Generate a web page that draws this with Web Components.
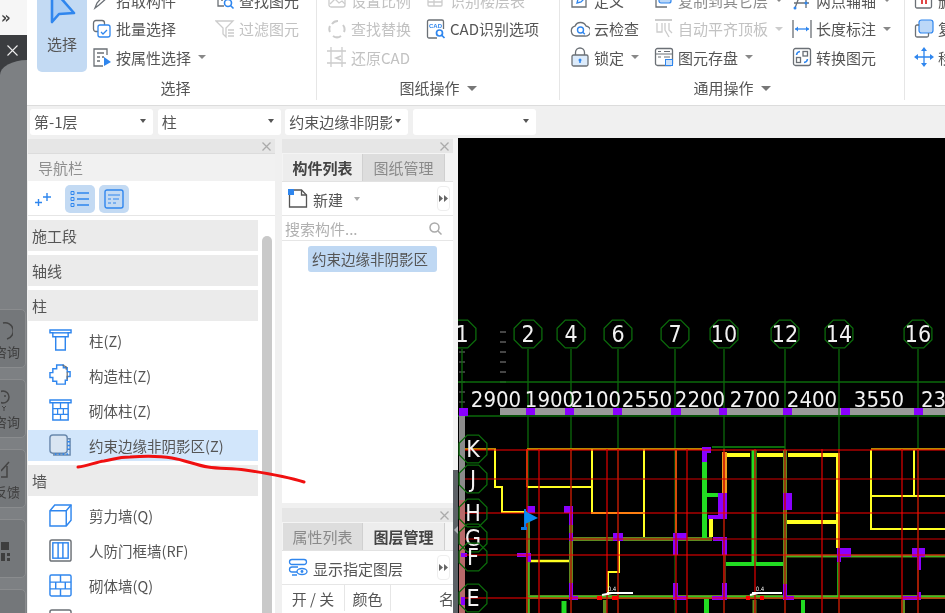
<!DOCTYPE html>
<html lang="zh"><head><meta charset="utf-8"><title>GTJ</title>
<style>
html,body{margin:0;height:100%;overflow:hidden;background:#f0f0f0}
body{font:15px "Noto Sans CJK SC","Noto Sans",sans-serif;color:#555}
app-shell{width:945px;height:613px}
</style></head>
<body>
<app-shell>
  <gtj-sidebar slot="side"></gtj-sidebar>
  <gtj-ribbon slot="ribbon">
    <ribbon-group label="选择" width="290" arrow="0">
      <ribbon-large></ribbon-large>
      <ribbon-col width="123">
        <ribbon-item icon="pick" label="拾取构件"></ribbon-item>
        <ribbon-item icon="batch" label="批量选择"></ribbon-item>
        <ribbon-item icon="attr" label="按属性选择" caret></ribbon-item>
      </ribbon-col>
      <ribbon-col width="90">
        <ribbon-item icon="find" label="查找图元"></ribbon-item>
        <ribbon-item icon="filter" label="过滤图元" disabled></ribbon-item>
      </ribbon-col>
    </ribbon-group>
    <ribbon-group label="图纸操作" width="243" arrow="1" pad="10">
      <ribbon-col width="99">
        <ribbon-item icon="scale" label="设置比例" disabled></ribbon-item>
        <ribbon-item icon="replace" label="查找替换" disabled></ribbon-item>
        <ribbon-item icon="restore" label="还原CAD" disabled></ribbon-item>
      </ribbon-col>
      <ribbon-col width="130">
        <ribbon-item icon="floors" label="识别楼层表" disabled></ribbon-item>
        <ribbon-item icon="cad" label="CAD识别选项"></ribbon-item>
      </ribbon-col>
    </ribbon-group>
    <ribbon-group label="通用操作" width="345" arrow="1" pad="10">
      <ribbon-col width="84">
        <ribbon-item icon="define" label="定义"></ribbon-item>
        <ribbon-item icon="cloud" label="云检查"></ribbon-item>
        <ribbon-item icon="lock" label="锁定" caret></ribbon-item>
      </ribbon-col>
      <ribbon-col width="138">
        <ribbon-item icon="copyl" label="复制到其它层" caret soft></ribbon-item>
        <ribbon-item icon="align" label="自动平齐顶板" caret disabled></ribbon-item>
        <ribbon-item icon="save" label="图元存盘" caret></ribbon-item>
      </ribbon-col>
      <ribbon-col width="112">
        <ribbon-item icon="twopt" label="两点辅轴" caret></ribbon-item>
        <ribbon-item icon="dim" label="长度标注" caret></ribbon-item>
        <ribbon-item icon="conv" label="转换图元"></ribbon-item>
      </ribbon-col>
    </ribbon-group>
    <ribbon-group label="" width="40" arrow="0" pad="9" last>
      <ribbon-col width="60">
        <ribbon-item icon="del" label="删除"></ribbon-item>
        <ribbon-item icon="dup" label="复制"></ribbon-item>
        <ribbon-item icon="move" label="移动"></ribbon-item>
      </ribbon-col>
    </ribbon-group>
  </gtj-ribbon>
  <gtj-toolbar slot="toolbar">
    <gtj-select>第-1层</gtj-select>
    <gtj-select>柱</gtj-select>
    <gtj-select>约束边缘非阴影区</gtj-select>
    <gtj-select></gtj-select>
  </gtj-toolbar>
  <nav-panel slot="nav">
    <nav-section>施工段</nav-section>
    <nav-section>轴线</nav-section>
    <nav-section>柱</nav-section>
    <nav-item icon="col" first>柱(Z)</nav-item>
    <nav-item icon="gzz">构造柱(Z)</nav-item>
    <nav-item icon="qtz">砌体柱(Z)</nav-item>
    <nav-item icon="ys" selected>约束边缘非阴影区(Z)</nav-item>
    <nav-section>墙</nav-section>
    <nav-item icon="jlq" first>剪力墙(Q)</nav-item>
    <nav-item icon="rf">人防门框墙(RF)</nav-item>
    <nav-item icon="qtq">砌体墙(Q)</nav-item>
    <nav-item icon="more">砌块墙(Q)</nav-item>
  </nav-panel>
  <div slot="comp" style="display:flex;flex-direction:column;gap:5px;height:100%">
    <comp-panel style="height:364px" tab-a="构件列表" tab-b="图纸管理" active="a" tool="新建" tool-icon="new" search>
      <comp-chip>约束边缘非阴影区</comp-chip>
    </comp-panel>
    <comp-panel style="flex:1;min-height:0" tab-a="属性列表" tab-b="图层管理" active="b" tool="显示指定图层" tool-icon="layers">
      <layer-head></layer-head>
    </comp-panel>
  </div>
  <cad-canvas slot="canvas"></cad-canvas>
  <red-scribble slot="over"></red-scribble>
</app-shell>

<script>
const B='#2f86ee',G='#6b7076',LB='#a9cdf5';
const s=(c,w=1.3)=>`fill="none" stroke="${c}" stroke-width="${w}"`;
const ICONS={
 pick:`<path d="M3 18l2-5 8-9 3 3-9 8z" ${s(G)}/><path d="M12 5l3 3" ${s(B)}/>`,
 batch:`<rect x="1.5" y="1.5" width="11" height="11" rx="2.5" ${s(G)}/><rect x="6" y="6" width="12" height="12" rx="2" fill="#fff" stroke="${B}" stroke-width="1.3"/><path d="M9 13l2 2 4-4" ${s(B)}/>`,
 attr:`<path d="M15 8V2H2v17h9" ${s(G)}/><path d="M5 6h7M5 10h3M10 10h2M5 14h3" ${s(G)}/><path d="M12 10l7 5-7 4z" fill="${B}"/>`,
 find:`<path d="M14 2H3v14h6" ${s(G)}/><path d="M6 6h5M6 10h2" ${s(G)}/><circle cx="13" cy="13" r="3.5" ${s(B,1.6)}/><path d="M15.5 15.5l3 3" ${s(B,1.6)}/>`,
 filter:`<path d="M1 2h17l-7 7v9l-3-3V9z" ${s('#ccc')}/><path d="M13 11h6M13 14h6M13 17h6" ${s('#ccc')}/>`,
 scale:`<rect x="2" y="2" width="16" height="15" rx="2" ${s('#ccc')}/><path d="M3 14l5-5 4 4 3-2 3 3" ${s('#ccc')}/>`,
 replace:`<path d="M5 5a7 7 0 0 1 6-3M16 6a7 7 0 0 1 1 7M14 17a7 7 0 0 1-8 0M3 13a7 7 0 0 1 0-6" ${s('#ccc',2)}/>`,
 restore:`<path d="M4 0v20M0 4h19M15 0v20M0 16h19" ${s('#ccc')}/><path d="M14 9l-5 2 5 2" ${s('#ccc',1.6)}/>`,
 floors:`<rect x="2" y="2" width="14" height="14" rx="1" ${s('#ccc')}/><path d="M2 7h14M2 12h14M8 2v14" ${s('#ccc')}/>`,
 cad:`<path d="M11 19H3a1.500 1.500 0 0 1-1.500-1.500v-15A1.500 1.500 0 0 1 3 1h13a1.500 1.500 0 0 1 1.500 1.500V10" ${s(G)}/><text x="9.500" y="8.500" text-anchor="middle" font-size="6" font-weight="700" fill="${B}" font-family="'Liberation Sans',sans-serif">CAD</text><circle cx="13.500" cy="14" r="3" ${s(B,1.700)}/><path d="M15.500 16l3 3" ${s(B,1.700)}/>`,
 define:`<path d="M9 2H2v15h14v-7" ${s(G)}/><path d="M7 13l1-4 8-8 3 3-8 8z" ${s(B)}/>`,
 cloud:`<path d="M6 17a5 5 0 0 1-1-9.800A6 6 0 0 1 16 7a5 5 0 0 1-1 10z" ${s(G)}/><circle cx="10.500" cy="11" r="3" ${s(B,1.4)}/><path d="M12.800 13.300l2 2" ${s(B,1.4)}/>`,
 lock:`<rect x="2" y="8" width="16" height="11" rx="1.500" fill="#dcebfb" stroke="${G}" stroke-width="1.300"/><path d="M5.500 8V5.500a4.500 4.500 0 0 1 9 0V8" ${s(G)}/><circle cx="10" cy="13" r="1.500" fill="${B}"/><path d="M10 13v3" ${s(B,1.500)}/>`,
 copyl:`<rect x="5" y="1" width="12" height="12" rx="2" fill="#bcd8f8" stroke="${B}" stroke-width="1.200"/><path d="M2 8v9h11" ${s(G)}/>`,
 align:`<path d="M1 1h17" ${s('#ccc',2)}/><path d="M3 4v9h5V4M11 4v7l4 7M15 4v7l3 3" ${s('#ccc')}/>`,
 save:`<rect x="1.500" y="1.500" width="17" height="17" rx="2" ${s(G)}/><path d="M1.500 7h17M4 4.500h3M10 4.500h6M4 10h3M10 10h6" ${s(G,1)}/><rect x="11.500" y="12.500" width="7" height="6" fill="#cfe3fa" stroke="${B}"/>`,
 twopt:`<path d="M3 18L9 2M2 13h15M14 4v14" ${s(G)}/><circle cx="3" cy="18" r="1.500" fill="${B}"/><circle cx="14" cy="13" r="1.500" fill="${B}"/>`,
 dim:`<path d="M1 1v18M19 1v18" ${s(G)}/><path d="M3 10h14" ${s(B)}/><path d="M3 10l3-2.500v5zM17 10l-3-2.500v5z" fill="${B}"/>`,
 conv:`<rect x="1.500" y="1.500" width="17" height="17" rx="2" ${s(G)}/><rect x="4.500" y="10.500" width="4" height="5" ${s(G)}/><rect x="11" y="4.500" width="4.500" height="4.500" ${s(G)}/><path d="M4.500 8a4 4 0 0 1 3.500-3.500M15.500 12a4 4 0 0 1-3.500 3.500" ${s(B,1.500)}/>`,
 del:`<rect x="1.500" y="1" width="16" height="17" rx="1.500" ${s(G)}/><path d="M8 5v9M12 5v9" ${s('#d33',1.800)}/>`,
 dup:`<rect x="5" y="1" width="14" height="13" rx="2.500" fill="#bcd8f8" stroke="${B}" stroke-width="1.200"/><path d="M5 6H3a1.500 1.500 0 0 0-1.500 1.500v9A1.500 1.500 0 0 0 3 18h10a1.500 1.500 0 0 0 1.500-1.500V14" ${s(G)}/>`,
 move:`<path d="M10 2v16M2 10h16" ${s(B)}/><path d="M10 0l3 4H7zM10 20l3-4H7zM0 10l4-3v6zM20 10l-4-3v6z" fill="${B}"/>`,
 col:`<path d="M1 1h22v3h-3v4H4V4H1z" ${s(B,1.500)}/><path d="M7 8v14h10V8" ${s(B,1.500)}/><path d="M4 4h16" ${s(B,1.500)}/>`,
 gzz:`<path d="M8 1h7v3h4v4h3v5h-3v4h-2v4H8v-3H4v-4H1v-5h3V5h4z" ${s(B,1.500)}/><path d="M14 1l4 2v3M19 8v8" ${s(G)}/>`,
 qtz:`<path d="M1 1h22v3H1zM4 4h16v18H4z" ${s(B,1.500)}/><path d="M4 10h16M4 16h16M12 4v6M9 10v6M15 10v6M12 16v6" ${s(B,1.300)}/>`,
 ys:`<rect x="1" y="1" width="18" height="19" rx="3" fill="#d9e5f2" stroke="#6a89ad" stroke-width="1.500"/><path d="M19 5h3v17H5v-2" ${s('#6a89ad',1.500)}/><path d="M7 20v2M11 20v2M15 20v2M19 20v2M19 8h3M19 12h3M19 16h3" ${s(B,1.500)}/>`,
 jlq:`<path d="M1 7L6 1h17v16l-5 6H1z" ${s(B,1.500)}/><path d="M1 7h17v16M18 7l5-6" ${s(B,1.500)}/>`,
 rf:`<rect x="1" y="1" width="22" height="22" rx="2" ${s(G,1.500)}/><rect x="4" y="4" width="16" height="16" ${s(B,1.500)}/><path d="M9.500 4v16M14.500 4v16" ${s(B,1.500)}/>`,
 qtq:`<rect x="1" y="1" width="22" height="22" rx="1.500" ${s(B,1.500)}/><path d="M1 8.500h22M1 15.500h22M12 1v7.500M7 8.500v7M17 8.500v7M12 15.500v7.500" ${s(B,1.500)}/>`,
 more:`<rect x="1" y="1" width="22" height="22" rx="2" ${s(G,1.500)}/>`,
 new:`<path d="M8 1H1.500v17h17V6l-5-5H8" ${s('#555',1.300)}/><path d="M13.500 1v5h5" ${s('#555',1.300)}/><rect x="0" y="0" width="6" height="6" fill="${B}"/>`,
 layers:`<path d="M4 1.500h12a2.500 2.500 0 0 1 0 5H4a2.500 2.500 0 0 1 0-5zM10 9H4a2.500 2.500 0 0 0 0 5h5M9 17H4" ${s(B,1.300)}/><ellipse cx="14" cy="13.500" rx="5" ry="3" ${s(B,1.300)}/><circle cx="14" cy="13.500" r="1.400" fill="${B}"/>`
};
const icon=(n,w,h,vb)=>`<svg width="${w}" height="${h}" viewBox="0 0 ${vb} ${vb}" aria-hidden="true">${ICONS[n]||''}</svg>`;
class Base extends HTMLElement{
  html(h){(this.shadowRoot||this.attachShadow({mode:'open'})).innerHTML=h}
}
const def=(n,c)=>customElements.define(n,c);

def('app-shell',class extends Base{connectedCallback(){this.html(`<style>
:host{display:grid;grid-template-columns:27px 1fr;position:relative;overflow:hidden;background:#f0f0f0;filter:blur(.35px)}
.main{display:flex;flex-direction:column;min-width:0;height:613px}
.body{flex:1;min-height:0;display:flex;padding-left:1px}
.nav{width:247px;padding-top:1px;box-sizing:border-box;flex:none}
.comp{width:171px;margin-left:7px;padding-top:1px;box-sizing:border-box;flex:none}
.split{width:5px;flex:none;display:flex;flex-direction:column}
.split i{display:block;height:332px;background:#f4f4f4}
.split b{display:block;flex:1;background:#5c6166;position:relative}
.split b::after{content:"";position:absolute;left:1px;top:56px;border:4px solid transparent;border-right-color:#aeb2b6;border-left:0}
.cv{flex:1;min-width:0}
</style>
<slot name="side"></slot>
<div class="main"><slot name="ribbon"></slot><slot name="toolbar"></slot>
<div class="body"><div class="nav"><slot name="nav"></slot></div><div class="comp"><slot name="comp"></slot></div>
<div class="split"><i></i><b></b></div><div class="cv"><slot name="canvas"></slot></div></div></div>
<slot name="over"></slot>`)}});

def('gtj-sidebar',class extends Base{connectedCallback(){
 const btn=(t,ic)=>`<div class="b">${ic}<span>${t}</span></div>`;
 this.html(`<style>
:host{display:flex;flex-direction:column;height:613px;overflow:hidden;background:#fff;font-size:13px}
.top{height:35px;flex:none;color:#444;font:700 15px "DejaVu Sans",sans-serif;display:flex;align-items:center;box-sizing:border-box;background:#f6f6f6}
.top span{margin:0 0 0 1px}
.dark{flex:1;background:#3b3d40;display:flex;flex-direction:column}
.x{height:25px;flex:none;display:flex;align-items:center;justify-content:center;padding:5px 3px 0 0;box-sizing:border-box}
.grey{flex:1;background:#7d8083;border-top-left-radius:27px 15px;padding-top:249px;display:flex;flex-direction:column;gap:11px;box-sizing:border-box;overflow:hidden}
.b{height:59px;flex:none;box-sizing:border-box;width:42px;margin-left:-16px;border:1px solid #8a8c8e;border-radius:5px;background:#74777a;display:flex;flex-direction:column;align-items:center;justify-content:flex-end;color:#3e3e3e;position:relative;padding-bottom:6px;white-space:nowrap;line-height:18px}
.b svg{position:absolute;left:16px;top:9px}
.b span{margin-left:4px}
</style>
<div class="top"><span>»</span></div>
<div class="dark"><div class="x"><svg width="11" height="11" viewBox="0 0 11 11"><path d="M.5.5l10 10M10.500.5l-10 10" stroke="#eee" stroke-width="1.100" fill="none"/></svg></div>
<div class="grey">
${btn('咨询',`<svg width="12" height="22" viewBox="0 0 12 22"><path d="M2 4a6 6 0 0 1 4 16" fill="none" stroke="#444" stroke-width="1.500"/></svg>`)}
${btn('咨询',`<svg width="12" height="24" viewBox="0 0 12 24"><circle cx="2" cy="8" r="6" fill="none" stroke="#444" stroke-width="1.500"/><circle cx="4" cy="7" r="1" fill="#444"/><path d="M1 17l2 2 2-2M3 19v3" stroke="#444" fill="none"/></svg>`)}
${btn('反馈',`<svg width="12" height="22" viewBox="0 0 12 22"><path d="M0 12l8-9M6 7v11H0" fill="none" stroke="#444" stroke-width="1.500"/></svg>`)}
${btn('',`<svg width="10" height="20" viewBox="0 0 10 20" style="top:22px"><path d="M0 0h8v8H0zM0 11h4v8H0zM6 11h3v3H6zM6 16h3v3H6z" fill="#3e3e3e"/></svg>`)}
${btn('',``)}
</div></div>`)}});

def('gtj-ribbon',class extends Base{connectedCallback(){this.html(`<style>
:host{display:flex;height:106px;box-sizing:border-box;background:#fff;border-bottom:1px solid #dcdcdc;overflow:hidden;flex:none}
</style><slot></slot>`)}});

def('ribbon-group',class extends Base{connectedCallback(){
 const w=this.getAttribute('width'),pad=this.getAttribute('pad')??10;
 const last=this.hasAttribute('last');
 const caret=this.getAttribute('arrow')==='1'?'<i></i>':'';
 this.html(`<style>
:host{display:block;width:${w}px;box-sizing:border-box;flex:none;height:100px;${last?'':'border-right:1px solid #e6e6e6;'}}
.c{height:75px;display:flex;overflow:hidden;padding-left:${pad}px}
.l{height:25px;display:flex;align-items:center;justify-content:center;gap:7px;color:#555;padding-left:${this.getAttribute('label')==='选择'?8:0}px}
i{border:5px solid transparent;border-top:5px solid #777;border-bottom:0;display:block;margin-top:1px}
</style><div class="c"><slot></slot></div><div class="l">${this.getAttribute('label')}${caret}</div>`)}});

def('ribbon-large',class extends Base{connectedCallback(){this.html(`<style>
:host{display:flex;flex-direction:column;align-items:center;width:50px;height:72px;margin-right:5px;background:#c3daf3;border-radius:0 0 5px 5px;flex:none;color:#555;overflow:hidden;position:relative}
svg{display:block}
span{margin-top:3px;line-height:22px}
</style><svg width="30" height="30" viewBox="0 0 30 30"><path d="M5 -12L27 13 12 14 5 22z" fill="${LB}" stroke="${B}" stroke-width="2.600" stroke-linejoin="round"/></svg><span>选择</span>`)}});

def('ribbon-col',class extends Base{connectedCallback(){this.html(`<style>
:host{display:flex;flex-direction:column;width:${this.getAttribute('width')}px;flex:none;margin-top:-14px}
</style><slot></slot>`)}});

def('ribbon-item',class extends Base{connectedCallback(){
 const d=this.hasAttribute('disabled'),soft=this.hasAttribute('soft');
 this.html(`<style>
:host{display:flex;align-items:center;height:28.500px;flex:none;white-space:nowrap;color:${d?'#c2c2c2':soft?'#8c8c8c':'#555'}}
svg{flex:none;margin-right:4px;display:block}
i{border:4px solid transparent;border-top:4px solid ${d?'#ccc':'#888'};border-bottom:0;margin-left:7px;display:block}
</style>${icon(this.getAttribute('icon'),20,20,20)}<span>${this.getAttribute('label')}</span>${this.hasAttribute('caret')?'<i></i>':''}`)}});

def('gtj-toolbar',class extends Base{connectedCallback(){this.html(`<style>
:host{display:flex;height:32px;flex:none;box-sizing:border-box;padding:3px 0 3px 3px;gap:4.670px;background:#f0f0f0}
</style><slot></slot>`)}});

def('gtj-select',class extends Base{connectedCallback(){this.html(`<style>
:host{display:flex;align-items:center;width:123px;height:26px;box-sizing:border-box;background:#fff;border-radius:3px;padding:0 7px 2px 4px;flex:none;color:#555;white-space:nowrap;overflow:hidden}
.t{flex:1;min-width:0;overflow:hidden}
i{border:3.500px solid transparent;border-top:4px solid #555;border-bottom:0;flex:none;display:block;margin-left:3px}
</style><div class="t"><slot></slot></div><i></i>`)}});

def('nav-panel',class extends Base{connectedCallback(){this.html(`<style>
:host{display:flex;flex-direction:column;height:475px;background:#fff;overflow:hidden;position:relative}
.h{height:14px;flex:none;background:#e6e6e6;display:flex;justify-content:flex-end;align-items:center;padding-right:4px;border-bottom:1px solid #dcdcdc}
.t{height:27px;flex:none;background:#f1f1f1;color:#8f8f8f;padding-left:10px;line-height:27px;border-bottom:1px solid #fff}
.tools{height:33px;flex:none;display:flex;align-items:center;gap:4px;padding-left:7px;border-bottom:1px solid #e6e6e6}
.tools div{width:30px;height:28px;border-radius:5px;background:#c3daf3;display:flex;align-items:center;justify-content:center}
.tools svg.sp{margin-right:6px}
.list{flex:1;min-height:0;display:flex;flex-direction:column;width:230px;padding-top:4px;overflow:hidden}
.bar{position:absolute;left:234px;top:97px;bottom:0;width:10px;background:#c9c9c9;border-radius:5px 5px 0 0}
</style>
<div class="h"><svg width="9" height="9" viewBox="0 0 9 9"><path d="M.5.5l8 8M8.500.5l-8 8" stroke="#aaa" stroke-width="1.300"/></svg></div>
<div class="t">导航栏</div>
<div class="tools">
<svg class="sp" width="20" height="20" viewBox="0 0 20 20"><path d="M12 4v8M8 8h8M3.500 10v7M0 13.500h7" stroke="${B}" stroke-width="1.400"/></svg>
<div><svg width="20" height="16" viewBox="0 0 20 16"><path d="M7 2h12M7 8h12M7 14h12" stroke="${B}" stroke-width="1.300"/><path d="M1 .5h3v3H1zM1 6.500h3v3H1zM1 12.500h3v3H1z" fill="none" stroke="${B}"/></svg></div>
<div><svg width="20" height="20" viewBox="0 0 20 20"><rect x="1" y="1" width="18" height="18" rx="2" fill="none" stroke="${B}" stroke-width="1.400"/><path d="M4 6h12M4 10h3M9 10h6M4 14h3M9 14h3" stroke="${B}"/></svg></div>
</div>
<div class="list"><slot></slot></div><div class="bar"></div>`)}});

def('nav-section',class extends Base{connectedCallback(){this.html(`<style>
:host{display:block;height:31px;line-height:31px;background:#ebebeb;color:#555;padding-left:4px;margin-bottom:4px;flex:none}
</style><slot></slot>`)}});

def('nav-item',class extends Base{connectedCallback(){const sel=this.hasAttribute('selected'),first=this.hasAttribute('first');this.html(`<style>
:host{display:flex;align-items:center;height:${sel?31:35}px;${sel?'margin:2px 0 4px;':first?'margin-top:-2px;':''}background:${sel?'#d2e6fb':'transparent'};flex:none;color:#555;white-space:nowrap;font-size:14.500px}
svg{margin-left:21px;margin-right:17px;display:block;flex:none}
</style>${icon(this.getAttribute('icon'),23,23,24)}<span><slot></slot></span>`)}});

def('comp-panel',class extends Base{connectedCallback(){
 const a=this.getAttribute('active'),q=this.hasAttribute('search');
 const tab=(t,on,w)=>`<div class="tab ${on?'on':''}" style="width:${w}px">${t}</div>`;
 this.html(`<style>
:host{display:flex;flex-direction:column;background:#fff;overflow:hidden}
.h{height:14px;flex:none;background:#e6e6e6;display:flex;justify-content:flex-end;align-items:center;padding-right:4px}
.tabs{display:flex;height:27px;flex:none;padding:1px 0 0 1px;background:#f4f4f4;border-bottom:1px solid #e2e2e2;box-sizing:content-box}
.tab{height:27px;line-height:27px;text-align:center;background:#ddd;color:#8a8a8a;border-right:1px solid #d0d0d0;box-sizing:border-box}
.tab.on{background:#ededed;color:#444;font-weight:700}
.tool{height:33px;flex:none;display:flex;align-items:center;padding:0 0 0 6px;gap:5px;border-bottom:1px solid #e6e6e6;position:relative;color:#555;white-space:nowrap}
.tool span{transform:translateY(1px)}
.tool i{border:3.500px solid transparent;border-top:4px solid #aaa;border-bottom:0;margin-left:6px}
.more{position:absolute;left:155px;top:4px;width:13px;height:25px;border:1px solid #eee;border-radius:4px;box-sizing:border-box;display:flex;align-items:center;justify-content:center}
.s{height:24px;flex:none;display:flex;align-items:center;justify-content:space-between;padding:0 11px 0 3px;color:#b0b0b0;border-bottom:1px solid #e6e6e6}
.l{flex:1;min-height:0}
</style>
<div class="h"><svg width="9" height="9" viewBox="0 0 9 9"><path d="M.5.5l8 8M8.500.5l-8 8" stroke="#aaa" stroke-width="1.300"/></svg></div>
<div class="tabs">${tab(this.getAttribute('tab-a'),a==='a',80)}${tab(this.getAttribute('tab-b'),a==='b',82)}</div>
<div class="tool">${icon(this.getAttribute('tool-icon'),20,20,20)}<span>${this.getAttribute('tool')}</span>${q?'<i></i>':''}
<div class="more"><svg width="9" height="7" viewBox="0 0 9 7"><path d="M0 0l4 3.500L0 7zM5 0l4 3.500L5 7z" fill="#666"/></svg></div></div>
${q?`<div class="s"><span>搜索构件...</span><svg width="13" height="13" viewBox="0 0 13 13"><circle cx="5.500" cy="5.500" r="4.500" fill="none" stroke="#aaa" stroke-width="1.500"/><path d="M9 9l3.500 3.500" stroke="#aaa" stroke-width="1.500"/></svg></div>`:''}
<div class="l"><slot></slot></div>`)}});

def('comp-chip',class extends Base{connectedCallback(){this.html(`<style>
:host{display:block;width:129px;height:26px;line-height:26px;margin:5px 0 0 26px;box-sizing:border-box;padding-left:4px;background:#bfd8f3;border-radius:3px;color:#555;white-space:nowrap;font-size:14.500px}
</style><slot></slot>`)}});

def('layer-head',class extends Base{connectedCallback(){this.html(`<style>
:host{display:grid;grid-template-columns:63px 46px 1fr;height:26px;line-height:27px;color:#555;white-space:nowrap;overflow:hidden}
div{border-right:1px solid #e6e6e6;text-align:center}
div:last-child{border:0;text-align:right;margin-right:-1px}
</style><div>开 / 关</div><div>颜色</div><div>名</div>`)}});

def('cad-canvas',class extends Base{connectedCallback(){
 let o='';
 const L=(a,b,c,d,col,w=1)=>o+=`<line x1="${a}" y1="${b}" x2="${c}" y2="${d}" stroke="${col}" stroke-width="${w}"/>`;
 const P=(pts,col,w=2)=>o+=`<polyline points="${pts}" fill="none" stroke="${col}" stroke-width="${w}"/>`;
 const R=(a,b,c,d,col='#8a00ff')=>o+=`<rect x="${a}" y="${b}" width="${c-a}" height="${d-b}" fill="${col}"/>`;
 const T=(x,y,t,sz=22,anc='middle')=>o+=`<text x="${x}" y="${y}" font-size="${sz}" text-anchor="${anc}" fill="#f2f2f2" font-family="'DejaVu Sans Condensed','DejaVu Sans',sans-serif" font-stretch="condensed">${t}</text>`;
 const hept=(cx,cy,r=15,n=8,rot=Math.PI/8)=>{let p=[];for(let i=0;i<n;i++){const a=rot+i*2*Math.PI/n;p.push((cx+r*Math.cos(a)).toFixed(1)+','+(cy+r*Math.sin(a)).toFixed(1))}o+=`<polygon points="${p.join(' ')}" fill="none" stroke="#0b6a0b" stroke-width="1.300"/>`};
 const DG='#0b6a0b',RD='#ff0000',VR='#c40000',YE='#ffff22',GR='#22dd22',OL='#5f8a1e',OR='#f09a1a';
 const axes=[[462,'1'],[528,'2'],[571,'4'],[618,'6'],[675,'7'],[724,'10'],[785,'12'],[839,'14'],[918,'16']];
 for(let y=332;y<=382;y+=10)L(500,y,506,y,'#8a8a8a',1);
 for(let y=352;y<=405;y+=10)L(459,y,465,y,'#777',1);
 L(458,382,945,382,DG,1.300);L(458,416,945,416,DG,1.300);
 R(500,408,945,415,'#9a9a9a');
 axes.forEach(([x])=>L(x,349,x,613,DG,1.300));
 R(459,416,465,500,'#8c8c8c');R(459,500,465,613,'#b86a6a');
 L(465,449,496,449,'#b58a00',2);L(527,449,705,449,'#b58a00',2);L(871,449,945,449,'#b58a00',2);L(712,447,785,447,DG,2);
 P('495,449 495,487 502,487 502,512 527,512 ',YE,2);
 P('527,449 527,487',OR,2);P('527,487 592,487',YE,2);
 P('592,449 592,513 644,513',YE,2);P('644,449 644,538',YE,2);P('676,449 676,537',YE,2);
 P('530,561 570,561',YE,2.500);P('619,540 619,572 608,572 608,597',YE,2);
 P('871,450 871,529 945,529',YE,2);P('871,496 945,496',YE,2);P('914,450 914,496',YE,2);
 L(727,455,750,455,YE,4);L(757,455,783,455,YE,4);L(788,455,838,455,YE,4);L(838,453,838,548,YE,4);L(787,522,838,522,YE,4);L(711,519,711,537,YE,4);
 L(571,539,712,539,OL,4);L(571,523,571,597,OL,4);L(571,523,571,597,GR,1.200);L(528,520,528,613,OL,4);L(528,555,528,613,GR,1.200);
 L(528,597,945,597,OL,4);L(528,597,945,597,GR,1.400);
 L(704.500,462,704.500,538,GR,5);L(707,495,718,495,GR,4);L(724.500,452,724.500,493,OR,5);
 L(754,450,754,563,GR,5);L(726,564,783,564,GR,4);L(785,450,785,597,OL,4);L(785,450,785,597,GR,1.500);
 L(785,556,945,556,OL,3);L(785,556,945,556,GR,1);L(838,557,838,597,GR,1.500);L(918,570,918,592,'#4e5f10',2);L(724.500,555,724.500,583,'#5a3a10',3);
 L(564,601,564,613,GR,5);L(605,600,605,613,OL,4);L(706.500,599,706.500,613,GR,5);L(803,600,803,613,GR,4);L(754.500,600,754.500,613,OL,4);L(903,600,903,613,OL,4);
 [[527,506,535,513],[564,506,573,513],[569,513,573,525],[569,533,573,541],[613,533,623,541],[673,533,687,540],[673,540,678,555],[517,553,531,557],[527,557,531,562],[461,553,467,557],[569,583,573,597],[569,596,578,600],[673,583,678,597],[673,596,687,600],[461,597,465,605],
  [702,447,711,453],[702,453,707,462],[718,493,727,519],[708,515,727,519],[783,493,792,510],[837,548,851,557],[837,557,841,562],[912,548,925,557],[917,557,921,570],[713,537,727,541],[722,541,727,555],[722,583,727,597],[712,596,727,600],[783,584,787,597],[783,596,794,600],[902,596,921,600],[917,592,921,596]
 ].forEach(r=>R(...r));
 [[459,408,468,416],[526,408,535,415],[565,408,574,415],[613,408,622,415],[671,408,681,415],[719,408,727,415],[783,408,792,415],[841,408,850,415],[914,408,923,415]].forEach(r=>R(...r));
 [527,539,571,607,618,676,687,724,755,785,822,839,902,918].forEach(x=>L(x,449,x,613,VR,1.400));
 [450,479,513,539,555,598].forEach(y=>L(465,y,945,y,y==539||y==479?'#d40000':RD,1.200));
 R(597,596,602,600,RD);R(612,596,618,600,RD);R(746,596,750,600,RD);R(760,596,764,600,RD);
 L(602,595,612,593,'#fff',2);L(607,593,633,593,'#fff',2);L(750,595,758,593,'#fff',2);L(752,593,782,593,'#fff',2);
 T(612,591,'0.4',6);T(760,591,'0.4',6);
 o+=`<path d="M524 509h2v21h-2z" fill="#0a78e6"/><path d="M525 511l13 7-13 6z" fill="#0a8cf0"/><rect x="521" y="527" width="6" height="3" fill="#0a78e6"/>`;
 axes.forEach(([x,t])=>{hept(x,334);T(x,342,t,23)});
 [[473,449,'K'],[473,479,'J'],[473,513,'H'],[473,538,'G'],[473,557,'F'],[473,598,'E']].forEach(([x,y,t])=>{hept(x,y);T(x,y+8,t,23)});
 [[496,'2900'],[550,'1900'],[596,'2100'],[647,'2550'],[700,'2200'],[755,'2700'],[812,'2400'],[879,'3550']].forEach(([x,t])=>T(x,407,t,22));
 T(921,407,'23',22,'start');
 this.html(`<style>:host{display:block;width:487px;height:475px;background:#000;overflow:hidden}svg{display:block}</style>
 <svg width="487" height="475" viewBox="458 138 487 475">${o}</svg>`)}});

def('red-scribble',class extends Base{connectedCallback(){this.html(`<style>
:host{position:absolute;left:0;top:0;width:945px;height:613px;pointer-events:none}
svg{display:block}</style><svg width="945" height="613"><path d="M78 467C88 466 96 462 104 461 115 459 118 457 130 457 145 456 160 456 172 458 185 460 195 465 208 467 220 469 232 468 245 470 265 473 285 476 304 482" fill="none" stroke="#f01010" stroke-width="3" stroke-linecap="round"/></svg>`)}});
</script>
</body></html>
